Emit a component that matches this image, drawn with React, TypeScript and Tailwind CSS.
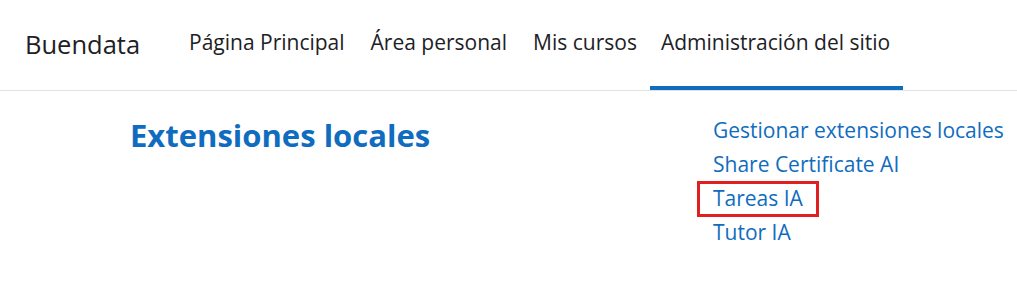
import React from "react";

export default function App() {
  const font = { fontFamily: '"Open Sans", "Noto Sans", sans-serif' };
  return (
    <div className="w-[1017px] h-[294px] bg-white text-[#1d2125] overflow-hidden" style={font}>
      <header className="h-[91px] border-b border-[#dee2e6] flex items-stretch">
        <div className="pl-[25px] w-[176px] flex items-center text-[25.5px] pb-[2px] whitespace-nowrap">Buendata</div>
        <nav className="flex items-stretch text-[21px] whitespace-nowrap">
          {["Página Principal", "Área personal", "Mis cursos"].map((t) => (
            <div key={t} className="px-[13px] flex items-center border-b-4 border-transparent">{t}</div>
          ))}
          <div className="pl-[11px] pr-[13px] flex items-center border-b-4 border-[#0f6cbf]">Administración del sitio</div>
        </nav>
      </header>
      <main className="flex pt-[24px]">
        <h1 className="pl-[130px] w-[698px] shrink-0 text-[31px] font-bold text-[#0f6cbf] leading-[40px] whitespace-nowrap">Extensiones locales</h1>
        <ul className="text-[21px] text-[#0f6cbf] leading-[34px] -mt-[2px] whitespace-nowrap">
          <li className="px-[15px]">Gestionar extensiones locales</li>
          <li className="px-[15px]">Share Certificate AI</li>
          <li className="px-[15px]">
            <span className="relative inline-block">
              Tareas IA
              <span className="absolute -left-[16px] -right-[16px] top-0 -bottom-[2px] border-[3px] border-[#e02020]"></span>
            </span>
          </li>
          <li className="px-[15px]">Tutor IA</li>
        </ul>
      </main>
    </div>
  );
}
